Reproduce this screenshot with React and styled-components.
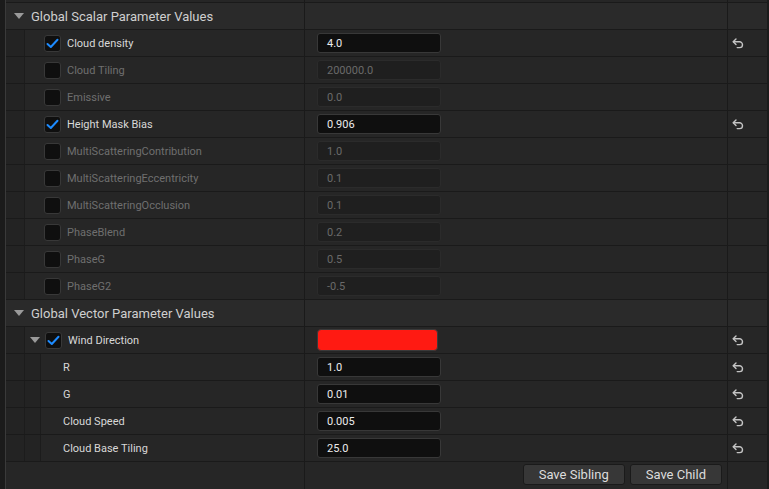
import styled, { createGlobalStyle } from "styled-components";

const GlobalStyle = createGlobalStyle`
  html, body {
    margin: 0;
    background: #1b1b1b;
    font-family: Roboto, "Noto Sans", sans-serif;
    overflow: hidden;
  }
`;

const scalars = [
  { name: "Cloud density", value: "4.0", on: true },
  { name: "Cloud Tiling", value: "200000.0" },
  { name: "Emissive", value: "0.0" },
  { name: "Height Mask Bias", value: "0.906", on: true },
  { name: "MultiScatteringContribution", value: "1.0" },
  { name: "MultiScatteringEccentricity", value: "0.1" },
  { name: "MultiScatteringOcclusion", value: "0.1" },
  { name: "PhaseBlend", value: "0.2" },
  { name: "PhaseG", value: "0.5" },
  { name: "PhaseG2", value: "-0.5" },
];

const vectorChildren = [
  { name: "R", value: "1.0" },
  { name: "G", value: "0.01" },
  { name: "Cloud Speed", value: "0.005" },
  { name: "Cloud Base Tiling", value: "25.0" },
];

const Arrow = () => (
  <svg width="10" height="6" viewBox="0 0 10 6">
    <path d="M0 0 H10 L5 6 Z" fill="#9a9a9a" />
  </svg>
);

const ResetIcon = () => (
  <svg width="12" height="11" viewBox="0 0 12 11" fill="none">
    <path d="M4 1 L1.2 3.8 L4 6.6" stroke="#c4c4c4" strokeWidth="1.4" strokeLinejoin="round" strokeLinecap="round" />
    <path d="M1.5 3.8 H7.6 A2.9 2.9 0 0 1 7.6 9.6 H5.2" stroke="#c4c4c4" strokeWidth="1.4" strokeLinecap="round" />
  </svg>
);

const Check = () => (
  <svg width="13" height="11" viewBox="0 0 13 11" fill="none">
    <path d="M1.5 6 L4.8 9 L11.5 1.8" stroke="#1d8bff" strokeWidth="2" strokeLinecap="round" strokeLinejoin="round" />
  </svg>
);

const App = () => {
  return (
    <>
      <GlobalStyle />
      <Panel>
        <Row $h={2}>
          <NameCell />
          <ValueCell />
          <ResetCell />
        </Row>

        <Row $header>
          <NameCell>
            <HeaderLabel>
              <Arrow />
              Global Scalar Parameter Values
            </HeaderLabel>
          </NameCell>
          <ValueCell />
          <ResetCell />
        </Row>

        {scalars.map((p) => (
          <Row key={p.name}>
            <NameCell>
              <Indent />
              <Label $pad={19}>
                <CheckBox>{p.on && <Check />}</CheckBox>
                <Name $off={!p.on}>{p.name}</Name>
              </Label>
            </NameCell>
            <ValueCell>
              <NumberBox $off={!p.on}>{p.value}</NumberBox>
            </ValueCell>
            <ResetCell>{p.on && <ResetIcon />}</ResetCell>
          </Row>
        ))}

        <Row $header>
          <NameCell>
            <HeaderLabel>
              <Arrow />
              Global Vector Parameter Values
            </HeaderLabel>
          </NameCell>
          <ValueCell />
          <ResetCell />
        </Row>

        <Row>
          <NameCell>
            <Indent />
            <Label $pad={5}>
              <Arrow />
              <CheckBox $left={5}>
                <Check />
              </CheckBox>
              <Name>Wind Direction</Name>
            </Label>
          </NameCell>
          <ValueCell>
            <Swatch />
          </ValueCell>
          <ResetCell>
            <ResetIcon />
          </ResetCell>
        </Row>

        {vectorChildren.map((p) => (
          <Row key={p.name}>
            <NameCell>
              <Indent />
              <Indent $w={16} />
              <Label $pad={22}>
                <Name>{p.name}</Name>
              </Label>
            </NameCell>
            <ValueCell>
              <NumberBox>{p.value}</NumberBox>
            </ValueCell>
            <ResetCell>
              <ResetIcon />
            </ResetCell>
          </Row>
        ))}

        <Row $h={30}>
          <NameCell />
          <Footer>
            <Button>Save Sibling</Button>
            <Button>Save Child</Button>
          </Footer>
          <ResetCell />
        </Row>
      </Panel>
    </>
  );
};

const Panel = styled.div`
  margin-left: 5px;
  width: 761px;
  height: 489px;
  border-left: 1px solid #3a3a3a;
  display: flex;
  flex-direction: column;
  overflow: hidden;
`;

const Row = styled.div`
  display: flex;
  flex: none;
  height: ${(p) => (p.$h ? p.$h : 26)}px;
  border-bottom: 1px solid #1a1a1a;
  background: ${(p) => (p.$header ? "#2a2a2a" : "#262626")};
`;

const NameCell = styled.div`
  width: 298px;
  display: flex;
  align-items: stretch;
  border-right: 1px solid #1a1a1a;
`;

const ValueCell = styled.div`
  flex: 1;
  display: flex;
  align-items: center;
  padding-left: 12px;
  border-right: 1px solid #1a1a1a;
`;

const Footer = styled.div`
  flex: 1;
  display: flex;
  align-items: flex-start;
  justify-content: flex-end;
  gap: 5px;
  padding: 2px 5px 0 0;
  border-right: 1px solid #1a1a1a;
`;

const ResetCell = styled.div`
  width: 39px;
  display: flex;
  align-items: center;
  padding-left: 4px;
  padding-top: 1px;
  box-sizing: border-box;
`;

const Indent = styled.div`
  flex: none;
  width: ${(p) => (p.$w ? p.$w : 19)}px;
  background: #232323;
  border-right: 1px solid #1c1c1c;
  box-sizing: border-box;
`;

const HeaderLabel = styled.div`
  display: flex;
  align-items: center;
  gap: 7px;
  padding-left: 8px;
  font-size: 13px;
  color: #cfcfcf;
  white-space: nowrap;
`;

const Label = styled.div`
  display: flex;
  align-items: center;
  padding-left: ${(p) => p.$pad}px;
  white-space: nowrap;
`;

const CheckBox = styled.div`
  width: 17px;
  height: 17px;
  box-sizing: border-box;
  margin-left: ${(p) => (p.$left ? p.$left : 0)}px;
  margin-right: 6px;
  border: 1px solid #383838;
  border-radius: 3px;
  background: #0f0f0f;
  display: flex;
  align-items: center;
  justify-content: center;
`;

const Name = styled.span`
  font-size: 11px;
  color: ${(p) => (p.$off ? "#6f6f6f" : "#d8d8d8")};
`;

const NumberBox = styled.div`
  width: 124px;
  height: 20px;
  box-sizing: border-box;
  padding-left: 9px;
  display: flex;
  align-items: center;
  border-radius: 3px;
  font-size: 11px;
  background: ${(p) => (p.$off ? "#1f1f1f" : "#0f0f0f")};
  border: 1px solid ${(p) => (p.$off ? "#2b2b2b" : "#383838")};
  color: ${(p) => (p.$off ? "#6a6a6a" : "#ececec")};
`;

const Swatch = styled.div`
  width: 121px;
  height: 22px;
  box-sizing: border-box;
  border-radius: 4px;
  background: #ff1a12;
  border: 1px solid #3a3a3a;
`;

const Button = styled.button`
  height: 21px;
  padding: 0 15px;
  border: 1px solid #1a1a1a;
  border-radius: 3px;
  background: #373737;
  color: #dcdcdc;
  font-family: Roboto, "Noto Sans", sans-serif;
  font-size: 13px;
`;

export default App;
